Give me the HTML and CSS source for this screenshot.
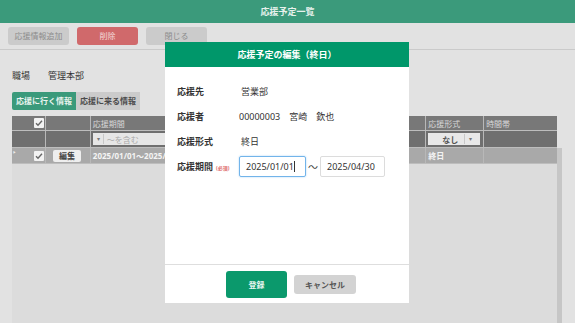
FILE: index.html
```html
<!DOCTYPE html>
<html>

<head>
    <meta charset="UTF-8">
    <title>応援予定一覧</title>
    <link rel="stylesheet" href="styles.css">
</head>

<body>
    <!-- ヘッダー -->
    <div class="header">応援予定一覧</div>

    <!-- ツールバー -->
    <div class="toolbar">
        <a class="btn btn-gray" href="javascript:;">応援情報追加</a>
        <a class="btn btn-red" href="javascript:;">削除</a>
        <a class="btn btn-gray" href="javascript:;">閉じる</a>
    </div>

    <!-- 職場 -->
    <div class="info">
        <span class="info-label">職場</span>
        <span>管理本部</span>
    </div>

    <!-- タブ -->
    <div class="tabs">
        <a class="tab tab-on" href="javascript:;">応援に行く情報</a>
        <a class="tab" href="javascript:;">応援に来る情報</a>
    </div>

    <!-- 一覧 -->
    <div class="grid-wrap">
        <div class="grid">
            <div class="row row-head">
                <div class="cell c1"><span class="chk"><svg width="8" height="8" viewBox="0 0 8 8"><path d="M1 4.2 L3 6.2 L7 1.8" fill="none" stroke="#666" stroke-width="1.4"/></svg></span></div>
                <div class="cell c2"></div>
                <div class="cell c3">応援期間</div>
                <div class="cell c4"></div>
                <div class="cell c5">応援形式</div>
                <div class="cell c6">時間帯</div>
            </div>
            <div class="row row-filter">
                <div class="cell c1"></div>
                <div class="cell c2"></div>
                <div class="cell c3">
                    <div class="filter-box"><span class="arrow">▾</span><span class="sep"></span><span class="hint">～を含む</span></div>
                </div>
                <div class="cell c4"></div>
                <div class="cell c5">
                    <div class="select-box"><span class="sel-text">なし</span><span class="sep"></span><span class="arrow">▾</span></div>
                </div>
                <div class="cell c6"></div>
            </div>
            <div class="row row-data">
                <div class="cell c1"><span class="mark">‣</span><span class="chk"><svg width="8" height="8" viewBox="0 0 8 8"><path d="M1 4.2 L3 6.2 L7 1.8" fill="none" stroke="#666" stroke-width="1.4"/></svg></span></div>
                <div class="cell c2"><a class="edit-btn" href="javascript:;">編集</a></div>
                <div class="cell c3">2025/01/01～2025/04/30</div>
                <div class="cell c4"></div>
                <div class="cell c5">終日</div>
                <div class="cell c6"></div>
            </div>
        </div>
        <div class="scroll"></div>
    </div>

    <!-- 編集ダイアログ -->
    <div class="modal">
        <div class="modal-head">応援予定の編集（終日）</div>
        <div class="modal-body">
            <div class="form-row">
                <span class="form-label">応援先</span>
                <span class="form-value">営業部</span>
            </div>
            <div class="form-row">
                <span class="form-label">応援者</span>
                <span class="form-value form-value-num">00000003　宮崎　欽也</span>
            </div>
            <div class="form-row">
                <span class="form-label">応援形式</span>
                <span class="form-value">終日</span>
            </div>
            <div class="form-row">
                <span class="form-label">応援期間<em class="req">(必須)</em></span>
                <span class="date-input date-focus">2025/01/01<i class="caret"></i></span>
                <span class="tilde">〜</span>
                <span class="date-input">2025/04/30</span>
            </div>
        </div>
        <div class="modal-foot">
            <a class="btn-save" href="javascript:;">登録</a>
            <a class="btn-cancel" href="javascript:;">キャンセル</a>
        </div>
    </div>
</body>

</html>
```

FILE: styles.css
```css
* {
    margin: 0;
    padding: 0;
}

body {
    width: 575px;
    height: 323px;
    overflow: hidden;
    background-color: #e2e2e2;
    font-family: "Noto Sans", "Noto Sans CJK JP", sans-serif;
    font-size: 9px;
    color: #333;
    position: relative;
}

a {
    text-decoration: none;
}

/* ヘッダー */
.header {
    height: 23px;
    line-height: 23px;
    background-color: #3b9a7b;
    color: #e6f1ec;
    text-align: center;
    font-weight: bold;
}

/* ツールバー */
.toolbar {
    display: flex;
    gap: 8px;
    height: 22px;
    padding: 4px 0 0 8px;
    border-bottom: 1px solid #cacaca;
}

.btn {
    width: 61px;
    height: 18px;
    line-height: 18px;
    border-radius: 3px;
    text-align: center;
    font-size: 8px;
}

.btn-gray {
    background-color: #cbcbcb;
    color: #8c8c8c;
}

.btn-red {
    background-color: #d0696b;
    color: #f3d8d8;
}

/* 職場 */
.info {
    display: flex;
    height: 18px;
    line-height: 18px;
    margin-top: 17px;
    padding-left: 12px;
}

.info-label {
    width: 36px;
}

/* タブ */
.tabs {
    display: flex;
    margin: 7px 0 0 12px;
}

.tab {
    width: 64px;
    height: 18px;
    line-height: 18px;
    text-align: center;
    font-size: 8px;
    font-weight: bold;
    background-color: #cbcbcb;
    color: #4a4a4a;
}

.tab-on {
    background-color: #3b9a7b;
    color: #eaf4ef;
    border-radius: 2px 0 0 2px;
}

/* 一覧 */
.grid-wrap {
    display: flex;
    margin: 6px 0 0 12px;
    height: 207px;
}

.grid {
    width: 545px;
    background-color: #dcdcdc;
}

.row {
    display: flex;
    border-bottom: 1px solid #bdbdbd;
}

.row-head {
    height: 14px;
    background-color: #787878;
    color: #d8d8d8;
}

.row-filter {
    height: 16px;
    background-color: #6f6f6f;
}

.row-data {
    height: 15px;
    background-color: #a9a9a9;
    color: #f4f4f4;
    font-weight: bold;
}

.cell {
    display: flex;
    align-items: center;
    border-right: 1px solid #b8b8b8;
    padding-left: 2px;
    font-size: 8px;
    overflow: hidden;
    white-space: nowrap;
}

.c1 {
    width: 30px;
    justify-content: flex-end;
    padding-right: 1px;
    position: relative;
}

.c2 {
    width: 42px;
}

.c3 {
    width: 207px;
}

.c4 {
    width: 123px;
}

.c5 {
    width: 55px;
}

.c6 {
    width: 71px;
    border-right: none;
}

.chk {
    width: 10px;
    height: 10px;
    background-color: #f2f2f2;
    border-radius: 1px;
    display: flex;
    align-items: center;
    justify-content: center;
}

.mark {
    position: absolute;
    left: 1px;
    top: 0;
    font-size: 7px;
    color: #eee;
}

.edit-btn {
    margin-left: 5px;
    width: 28px;
    height: 12px;
    line-height: 12px;
    text-align: center;
    background-color: #eeeeee;
    color: #444;
    border-radius: 2px;
}

.filter-box {
    display: flex;
    align-items: center;
    width: 100%;
    height: 12px;
    background-color: #e6e6e6;
    color: #aaa;
}

.select-box {
    display: flex;
    align-items: center;
    width: 52px;
    height: 12px;
    background-color: #e8e8e8;
    color: #555;
}

.arrow {
    font-size: 6px;
    color: #777;
    padding: 0 3px 0 4px;
}

.sep {
    width: 1px;
    height: 10px;
    background-color: #c8c8c8;
    margin-right: 3px;
}

.select-box .sel-text {
    width: 30px;
    text-align: right;
    padding-right: 6px;
    font-weight: bold;
}

.select-box .sep {
    margin-right: 0;
}

.scroll {
    width: 5px;
    margin-top: 32px;
    background-color: #c6c6c6;
}

/* 編集ダイアログ */
.modal {
    position: absolute;
    left: 165px;
    top: 42px;
    width: 244px;
    height: 261px;
    background-color: #fff;
    display: flex;
    flex-direction: column;
}

.modal-head {
    height: 25px;
    line-height: 25px;
    background-color: #00976a;
    color: #fff;
    text-align: center;
    font-weight: bold;
}

.modal-body {
    flex: 1;
    padding: 12px 0 0 12px;
    border-bottom: 1px solid #dedede;
}

.form-row {
    display: flex;
    align-items: center;
    height: 25px;
}

.form-label {
    width: 62px;
    font-weight: bold;
    color: #333;
}

.form-value {
    padding-left: 2px;
}

.form-value-num {
    padding-left: 0;
}

.req {
    font-style: normal;
    font-size: 5px;
    color: #d66;
    margin-left: 3px;
}

.date-input {
    display: flex;
    align-items: center;
    width: 65px;
    height: 21px;
    border: 1px solid #dcdcdc;
    border-radius: 2px;
    padding-left: 6px;
    box-sizing: border-box;
    color: #333;
}

.date-focus {
    width: 67px;
    border-color: #72b4ea;
    box-shadow: 0 0 2px #a8d2f4;
}

.caret {
    width: 1px;
    height: 11px;
    background-color: #333;
}

.tilde {
    width: 14px;
    text-align: center;
    font-size: 10px;
    color: #444;
}

.modal-foot {
    display: flex;
    align-items: center;
    gap: 7px;
    height: 38px;
    padding-left: 61px;
}

.btn-save {
    width: 61px;
    height: 27px;
    line-height: 27px;
    text-align: center;
    background-color: #0b996c;
    color: #eaf6f1;
    border-radius: 3px;
    font-weight: bold;
    font-size: 8px;
}

.btn-cancel {
    width: 62px;
    height: 19px;
    line-height: 19px;
    text-align: center;
    background-color: #d3d3d3;
    color: #555;
    border-radius: 3px;
    font-weight: bold;
    font-size: 8px;
}
```
